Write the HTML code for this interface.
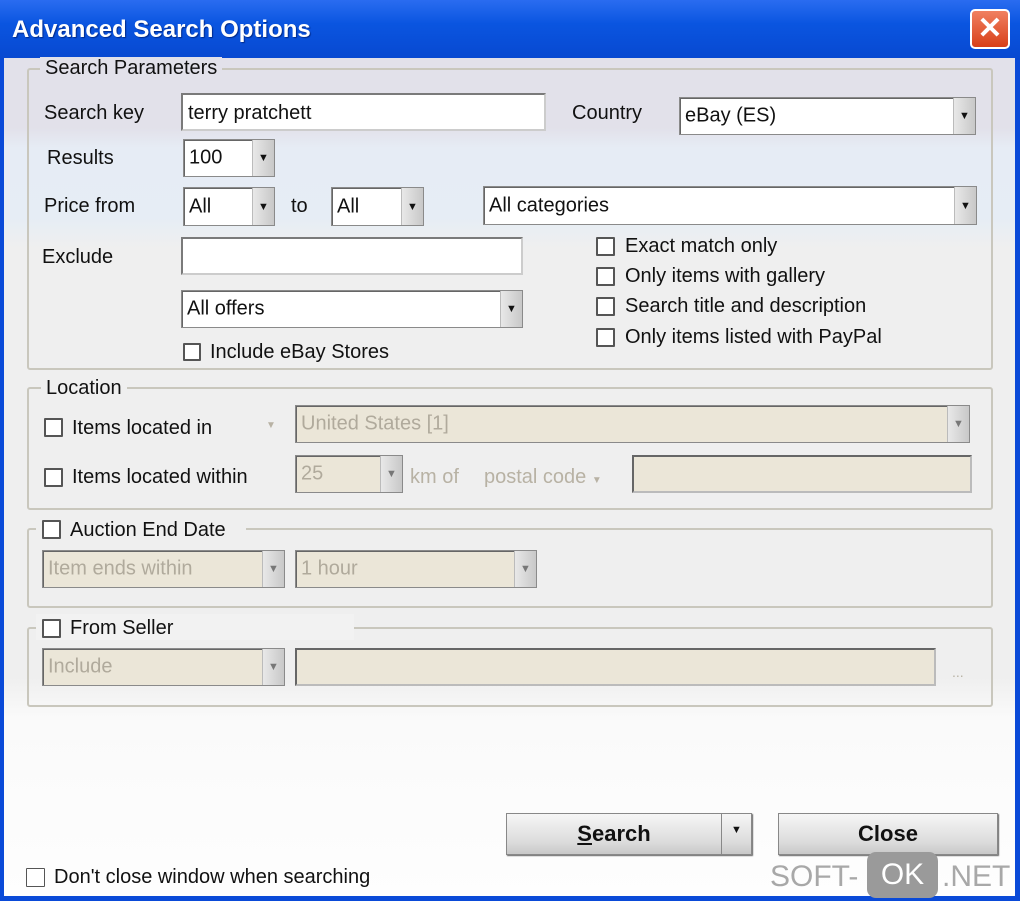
<!DOCTYPE html><html><head><meta charset="utf-8"><style>
*{box-sizing:border-box;margin:0;padding:0}
body{width:1020px;height:901px;overflow:hidden;font-family:"Liberation Sans",sans-serif;font-size:20px;color:#111;position:relative;background:#0a4ad8}
.a{position:absolute;white-space:nowrap}
#win{position:absolute;left:4px;top:58px;width:1011px;height:838px;background:linear-gradient(#e2e1ea 0,#e2e1ea 70px,#e6ecf5 90px,#e6edf5 160px,#efefef 190px,#efefef 620px,#fafafa 660px,#fff 900px)}
.t{line-height:22px;transform:translateY(-11px)}
.g{position:absolute;border:2px solid #c9c7bd;border-radius:3px}
.leg{position:absolute;background:inherit;padding:0 4px}
.tb{position:absolute;background:#fff;border:2px solid #7a7a7a;border-right-color:#ccc;border-bottom-color:#ccc}
.cb{position:absolute;background:#fff;border:1px solid #8a8a8a;box-shadow:inset 1px 1px 0 #666}
.cb .btn{position:absolute;right:0;top:0;bottom:0;width:22px;background:linear-gradient(90deg,#e8e8e8,#c8c8c8);border-left:1px solid #bbb;font-size:11px;display:flex;align-items:center;justify-content:center}
.cb span{position:absolute;left:5px;top:50%;transform:translateY(-50%)}
.dis{background:#ebe6d8;color:#b0aa9c}
.dis .btn{color:#777}
.ck{position:absolute;width:19px;height:19px;background:#fff;border:2px solid #555;border-radius:1px}
.bt{position:absolute;background:linear-gradient(#f6f6f6,#dcdcdc 70%,#c8c8c8);border:1px solid #888;box-shadow:1px 1px 1px #666;font-weight:bold;font-size:22px;display:flex;align-items:center;justify-content:center}
.dim{color:#b8b2a4}
</style></head><body>
<div class="a" style="left:0;top:0;width:1020px;height:60px;background:linear-gradient(#2a6cf0,#0a55e0 40%,#0848d0)"></div>
<div class="a" style="left:12px;top:16px;color:#fff;font-weight:bold;font-size:24px;text-shadow:1px 1px 1px #002a8a">Advanced Search Options</div>
<div class="a" style="left:970px;top:9px;width:40px;height:40px;border:2px solid #fff;border-radius:5px;background:linear-gradient(#f08060,#d84018);color:#fff;font-size:30px;font-weight:bold;text-align:center;line-height:36px">✕</div>
<div id="win"></div>

<div class="g" style="left:27px;top:68px;width:966px;height:302px"></div>
<div class="a t" style="left:40px;top:68px;padding:0 5px;background:#e2e1ea">Search Parameters</div>
<div class="a t" style="left:44px;top:113px">Search key</div>
<div class="tb" style="left:181px;top:93px;width:365px;height:38px"><span class="a" style="left:5px;top:7px">terry pratchett</span></div>
<div class="a t" style="left:572px;top:113px">Country</div>
<div class="cb" style="left:679px;top:97px;width:297px;height:38px"><span>eBay (ES)</span><div class="btn">▼</div></div>
<div class="a t" style="left:47px;top:158px">Results</div>
<div class="cb" style="left:183px;top:139px;width:92px;height:38px"><span>100</span><div class="btn">▼</div></div>
<div class="a t" style="left:44px;top:206px">Price from</div>
<div class="cb" style="left:183px;top:187px;width:92px;height:39px"><span>All</span><div class="btn">▼</div></div>
<div class="a t" style="left:291px;top:206px">to</div>
<div class="cb" style="left:331px;top:187px;width:93px;height:39px"><span>All</span><div class="btn">▼</div></div>
<div class="cb" style="left:483px;top:186px;width:494px;height:39px"><span>All categories</span><div class="btn">▼</div></div>
<div class="a t" style="left:42px;top:257px">Exclude</div>
<div class="tb" style="left:181px;top:237px;width:342px;height:38px"></div>
<div class="cb" style="left:181px;top:290px;width:342px;height:38px"><span>All offers</span><div class="btn">▼</div></div>
<div class="ck" style="left:183px;top:343px;width:18px;height:18px"></div>
<div class="a t" style="left:210px;top:352px">Include eBay Stores</div>
<div class="ck" style="left:596px;top:237px;width:19px"></div><div class="a t" style="left:625px;top:246px">Exact match only</div>
<div class="ck" style="left:596px;top:267px"></div><div class="a t" style="left:625px;top:276px">Only items with gallery</div>
<div class="ck" style="left:596px;top:297px"></div><div class="a t" style="left:625px;top:306px">Search title and description</div>
<div class="ck" style="left:596px;top:328px"></div><div class="a t" style="left:625px;top:337px">Only items listed with PayPal</div>

<div class="g" style="left:27px;top:387px;width:966px;height:123px"></div>
<div class="a t" style="left:41px;top:388px;padding:0 5px;background:#efefef">Location</div>
<div class="ck" style="left:44px;top:418px"></div><div class="a t" style="left:72px;top:428px">Items located in</div>
<div class="a dim" style="left:266px;top:420px;font-size:10px">▼</div>
<div class="cb dis" style="left:295px;top:405px;width:675px;height:38px"><span>United States [1]</span><div class="btn">▼</div></div>
<div class="ck" style="left:44px;top:468px"></div><div class="a t" style="left:72px;top:477px">Items located within</div>
<div class="cb dis" style="left:295px;top:455px;width:108px;height:38px"><span>25</span><div class="btn">▼</div></div>
<div class="a t dim" style="left:410px;top:477px">km of</div>
<div class="a t dim" style="left:484px;top:477px">postal code <span style="font-size:10px">▼</span></div>
<div class="tb dis" style="left:632px;top:455px;width:340px;height:38px;border-color:#666 #bbb #bbb #666"></div>

<div class="g" style="left:27px;top:528px;width:966px;height:80px"></div>
<div class="a" style="left:36px;top:516px;width:210px;height:26px;background:#efefef"></div>
<div class="ck" style="left:42px;top:520px"></div><div class="a t" style="left:70px;top:530px">Auction End Date</div>
<div class="cb dis" style="left:42px;top:550px;width:243px;height:38px"><span>Item ends within</span><div class="btn">▼</div></div>
<div class="cb dis" style="left:295px;top:550px;width:242px;height:38px"><span>1 hour</span><div class="btn">▼</div></div>

<div class="g" style="left:27px;top:627px;width:966px;height:80px"></div>
<div class="a" style="left:36px;top:614px;width:318px;height:26px;background:#f2f2f2"></div>
<div class="ck" style="left:42px;top:619px"></div><div class="a t" style="left:70px;top:628px">From Seller</div>
<div class="cb dis" style="left:42px;top:648px;width:243px;height:38px"><span>Include</span><div class="btn">▼</div></div>
<div class="tb dis" style="left:295px;top:648px;width:641px;height:38px;border-color:#666 #bbb #bbb #666"></div>
<div class="a dim" style="left:952px;top:664px;font-size:14px">...</div>

<div class="bt" style="left:506px;top:813px;width:246px;height:42px"><span style="margin-right:30px"><u>S</u>earch</span><div class="a" style="right:0;top:0;bottom:0;width:30px;border-left:1px solid #888;font-size:11px;display:flex;justify-content:center;padding-top:10px">▼</div></div>
<div class="bt" style="left:778px;top:813px;width:220px;height:42px">Close</div>
<div class="ck" style="left:26px;top:868px;border-width:1px"></div><div class="a t" style="left:54px;top:877px">Don't close window when searching</div>
<div class="a" style="left:770px;top:857px;font-size:30px;color:#a8a8a8;line-height:40px">SOFT-</div>
<div class="a" style="left:867px;top:852px;width:71px;height:46px;border-radius:9px;background:#9a9a9a;color:#fff;font-size:30px;text-align:center;line-height:46px">OK</div>
<div class="a" style="left:942px;top:857px;font-size:30px;color:#a8a8a8;line-height:40px">.NET</div>
</body></html>
